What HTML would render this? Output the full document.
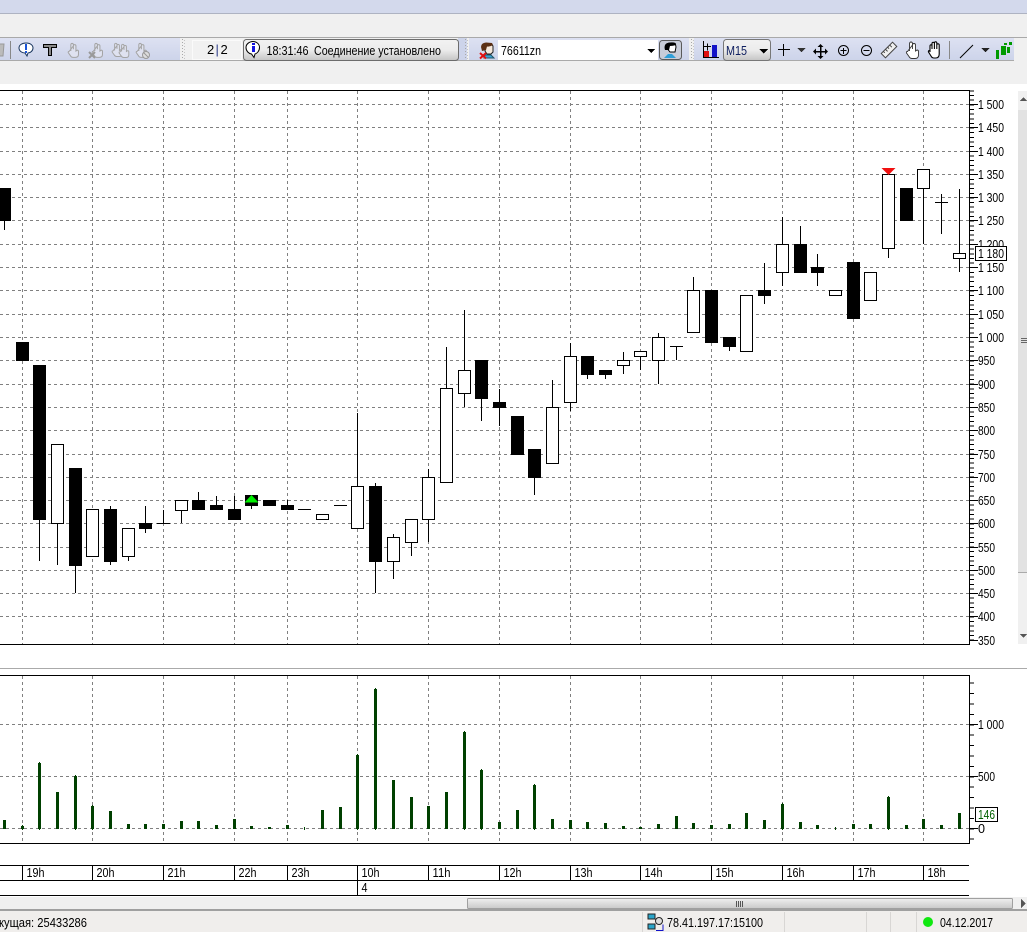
<!DOCTYPE html>
<html><head><meta charset="utf-8"><title>Chart</title>
<style>
html,body{margin:0;padding:0;background:#fff;overflow:hidden}
svg{display:block;font-family:"Liberation Sans","Noto Sans CJK SC",sans-serif;font-size:13px}
.c{shape-rendering:crispEdges}
.g{stroke:#808080;stroke-width:1;stroke-dasharray:3 3;fill:none}
.w{fill:#fff;stroke:#000;stroke-width:1}
</style></head><body>
<svg width="1027" height="932" viewBox="0 0 1027 932" xmlns="http://www.w3.org/2000/svg">
<defs>
<linearGradient id="tb" x1="0" y1="0" x2="0" y2="1"><stop offset="0" stop-color="#dde1f2"/><stop offset="1" stop-color="#cdd4ea"/></linearGradient>
<linearGradient id="btn" x1="0" y1="0" x2="0" y2="1"><stop offset="0" stop-color="#f2f2f2"/><stop offset=".5" stop-color="#ececec"/><stop offset="1" stop-color="#c4c4c4"/></linearGradient>
<linearGradient id="sb" x1="0" y1="0" x2="0" y2="1"><stop offset="0" stop-color="#f0f0f0"/><stop offset="1" stop-color="#c9c9c9"/></linearGradient>
<g id="hand"><path d="M4.500 10V3q0-2 1.500-2t1.500 2v5M7.500 4q0-1.500 1.500-1.500T10.500 4v6l1.500-1q1.500 0 1.500 1.500V14q0 3.500-3.500 3.500H7q-2 0-3-2L1.500 12q-.5-1.500 1-1.500z"/></g>
<g id="palm"><path d="M3 11V5q0-1.200 1-1.200T5 5v3V2.500q0-1.200 1.200-1.200t1.200 1.200V8V2q0-1.200 1.200-1.200T9.800 2v6V4q0-1.200 1.200-1.200T12.200 4v9q0 4-3.500 4H7q-2 0-3-2l-2.500-4q-.5-1.500 1-1.500z"/></g>
</defs>

<!-- window background -->
<rect class="c" x="0" y="0" width="1027" height="13" fill="#d3d9ec"/>
<rect class="c" x="0" y="13" width="1027" height="1" fill="#aeb3c2"/>
<rect class="c" x="0" y="14" width="1027" height="70" fill="#f0f0f0"/>
<rect class="c" x="0" y="37" width="1027" height="1" fill="#a9a9a9"/>
<rect class="c" x="0" y="38" width="180" height="22" fill="url(#tb)"/>
<rect class="c" x="458" y="38" width="9" height="22" fill="#cdd4ea"/>
<rect class="c" x="469" y="38" width="220" height="22" fill="url(#tb)"/>
<rect class="c" x="694" y="38" width="320" height="22" fill="url(#tb)"/>
<rect class="c" x="0" y="60" width="1014" height="1" fill="#aaa"/>
<path class="c" d="M182.500 39V60M465.500 39V60M691.500 39V60" stroke="#a8a8a8" stroke-dasharray="1 2"/>
<path class="c" d="M184.500 40V60M467.500 40V60M693.500 40V60" stroke="#c4c4c4" stroke-dasharray="1 2"/>

<!-- left toolbar icons -->
<path d="M-3 44h7l-1 12h-6z" fill="#bbb" stroke="#999"/>
<rect class="c" x="10" y="41" width="1" height="18" fill="#888"/>
<path d="M26 43c4.500 0 7 2.300 7 5s-2.500 5-5 5l-1 3-2-3c-3 0-6-2-6-5s3-5 7-5z" fill="#fff" stroke="#16335c"/>
<rect class="c" x="25" y="44" width="2" height="6" fill="#1a55d8"/><rect class="c" x="25" y="51" width="2" height="2" fill="#1a55d8"/>
<path class="c" d="M43.500 44.500h13v3h-5v8h-3v-8h-5z" fill="#888" stroke="#000"/>
<g fill="#dfe2f0" stroke="#a4a4a4" stroke-width="1.200">
<use href="#hand" transform="translate(67 42.500) scale(.85)"/>
<use href="#hand" transform="translate(91 42.500) scale(.85)"/>
<use href="#hand" transform="translate(111 42.500) scale(.8)"/>
<use href="#hand" transform="translate(118 43.500) scale(.8)"/>
<use href="#hand" transform="translate(135 42.500) scale(.85)"/>
</g>
<path d="M89 52l6 6M95 52l-6 6" stroke="#999" stroke-width="2"/>
<circle cx="146" cy="55" r="3.500" fill="#ddd" stroke="#999"/>
<path d="M143.500 52.500l5 5" stroke="#999"/>

<!-- panel 2|2 -->
<rect class="c" x="192.500" y="40.500" width="49" height="19" fill="#f1f1f1" stroke="#fafafa"/>
<text x="207" y="54">2</text><text x="215.500" y="54" fill="#30408c">|</text><text x="220.500" y="54">2</text>

<!-- message -->
<rect x="243.500" y="39.500" width="215" height="21" rx="3" fill="url(#btn)" stroke="#6c6c6c"/>
<path d="M253 41.500c3.500 0 6.500 2.500 6.500 6s-2.500 6-4.500 6.500l-1 3.500-2.500-3.500c-3-.5-5.500-3-5.500-6.500s3.500-6 7-6z" fill="#fff" stroke="#000"/>
<rect class="c" x="252" y="43" width="3" height="2" fill="#1212e0"/><rect class="c" x="252" y="46" width="3" height="6" fill="#1212e0"/>
<text x="266.500" y="55" textLength="42" lengthAdjust="spacingAndGlyphs">18:31:46</text>
<text x="314" y="55" textLength="127" lengthAdjust="spacingAndGlyphs">Соединение установлено</text>

<!-- account combo -->
<path d="M486 44h5l2 2v6l-2 2h-4l-2-3z" fill="#f4e8dc" stroke="#222"/>
<path d="M482 51l-1-4q0-4 5-4.500l6 .5 1 2q-3 2-6 1.500l-1 3.500z" fill="#5a2f14"/>
<path d="M484 58l1-3h6l3 3z" fill="#3aa4d8" stroke="#256"/>
<path d="M480 53l6 5.500M486 53l-6 5.500" stroke="#e01010" stroke-width="2"/>
<rect class="c" x="498" y="40" width="160" height="20" fill="#fff"/>
<text x="501" y="55" textLength="40" lengthAdjust="spacingAndGlyphs">76611zn</text>
<path class="c" d="M647 49h8l-4 4z" fill="#000"/>
<rect x="659.500" y="40.500" width="22" height="19" rx="3" fill="#c8ccd8" stroke="#5a5a5a"/>
<path d="M666 47q0-4 5-4t5 4l-1 5h-5z" fill="#fff" stroke="#000"/>
<path d="M665 50q-2-7 5-7.500t6 2.500q-3 1-6 1l-1 4z" fill="#000"/>
<path d="M664 58l4-4h4l4 4z" fill="#2f9fd8"/>

<!-- right toolbar -->
<path class="c" d="M703.500 41v16.500H719" stroke="#000" fill="none"/>
<rect class="c" x="704" y="51" width="5" height="6" fill="#e01010"/>
<rect class="c" x="712" y="45" width="5" height="12" fill="#1212c8"/>
<path class="c" d="M707.500 43.500v7M704 46.500h7" stroke="#000"/>
<rect x="723.500" y="39.500" width="47" height="21" rx="3" fill="url(#btn)" stroke="#777"/>
<text x="726" y="55" fill="#102060" textLength="21" lengthAdjust="spacingAndGlyphs">M15</text>
<path class="c" d="M759 49h9l-4.500 4.500z" fill="#000"/>
<path class="c" d="M783.500 44v12M778 49.500h12" stroke="#000"/>
<path class="c" d="M797 48h9l-4.500 4z" fill="#333"/>
<path class="c" d="M820.500 46v11M815 51.500h11" stroke="#000" stroke-width="1.500"/>
<path d="M820.500 44l-3 3h6zM820.500 59l-3-3h6zM813 51.500l3-3v6zM828 51.500l-3-3v6z" fill="#000"/>
<circle cx="843.500" cy="50.500" r="5" fill="none" stroke="#000"/><path class="c" d="M843.500 48v6M840.500 50.500h6" stroke="#000"/>
<circle cx="866.500" cy="50.500" r="5" fill="none" stroke="#000"/><path class="c" d="M863.500 50.500h6" stroke="#000"/>
<g transform="rotate(-45 889 50)"><rect x="881" y="47" width="16" height="6" fill="#f0f0f0" stroke="#444"/><path d="M884 47v2M887 47v3M890 47v2M893 47v3" stroke="#444"/></g>
<use href="#hand" x="905" y="41" fill="#fff" stroke="#333" stroke-width=".9"/>
<use href="#palm" x="927" y="41" fill="#fff" stroke="#000" stroke-width="1.100"/>
<rect class="c" x="949" y="41" width="1" height="18" fill="#888"/>
<path d="M960 58L973 45" stroke="#000"/>
<path class="c" d="M981 48h9l-4.500 4z" fill="#222"/>
<path class="c" d="M996 50h3v9h-3zM1001 46h5v9h-5zM1007 47h3v6h-3zM1004 43h3v2h-3zM1009 42h3v3h-3z" fill="#009a00"/>

<!-- main chart -->
<rect class="c" x="0" y="84" width="1027" height="827" fill="#fff"/>
<rect class="c" x="1018" y="91" width="9" height="553" fill="#f0f0f0"/>
<rect class="c" x="1018" y="110" width="9" height="462" fill="#e2e2e2"/>
<rect class="c" x="1018" y="572" width="9" height="1" fill="#aaa"/>
<path class="c" d="M1020 101h7l-3.500-4zM1020 634h7l-3.500 4z" fill="#555"/>
<path class="c" d="M1021 338.500h6M1021 340.500h6M1021 342.500h6" stroke="#666"/>

<!-- grids -->
<path class="c g" d="M0 104.500H969M0 127.500H969M0 151.500H969M0 174.500H969M0 197.500H969M0 220.500H969M0 244.500H969M0 267.500H969M0 290.500H969M0 314.500H969M0 337.500H969M0 360.500H969M0 384.500H969M0 407.500H969M0 430.500H969M0 454.500H969M0 477.500H969M0 500.500H969M0 523.500H969M0 547.500H969M0 570.500H969M0 593.500H969M0 616.500H969"/>
<path class="c g" d="M22.500 91V644M92.500 91V644M163.500 91V644M234.500 91V644M287.500 91V644M357.500 91V644M428.500 91V644M499.500 91V644M570.500 91V644M640.500 91V644M711.500 91V644M782.500 91V644M853.500 91V644M923.500 91V644"/>

<!-- wicks -->
<path class="c" stroke="#000" fill="none" d="M4.500 220V230M39.500 520V561M57.500 523V565M75.500 566V593M110.500 506V565M128.500 557V561M145.500 506V533M163.500 510V523M181.500 510V523M198.500 492V500M216.500 496V505M234.500 496V509M251.500 506V509M287.500 500V505M357.500 413V486M375.500 483V593M393.500 534V579M411.500 542V556M428.500 469V542M446.500 347V388M464.500 310V407M481.500 399V421M499.500 389V426M534.500 478V495M552.500 380V407M570.500 343V411M587.500 375V379M605.500 375V379M623.500 352V374M640.500 357V370M658.500 333V384M676.500 346V360M693.500 277V290M729.500 347V351M764.500 263V304M782.500 217V286M800.500 226V244M817.500 254V286M888.500 248V258M923.500 189V244M941.500 194V234M959.500 189V272M157 523.500H170M298 509.500H311M334 505.500H347M670 346.500H683M935 202.500H948"/>

<!-- black bodies -->
<g class="c" fill="#000">
<rect x="-2" y="188" width="13" height="33"/>
<rect x="16" y="342" width="13" height="19"/>
<rect x="33" y="365" width="13" height="155"/>
<rect x="69" y="468" width="13" height="98"/>
<rect x="104" y="509" width="13" height="53"/>
<rect x="139" y="523" width="13" height="6"/>
<rect x="192" y="500" width="13" height="10"/>
<rect x="210" y="505" width="13" height="5"/>
<rect x="228" y="509" width="13" height="11"/>
<rect x="245" y="495" width="13" height="11"/>
<rect x="263" y="500" width="13" height="6"/>
<rect x="281" y="505" width="13" height="5"/>
<rect x="369" y="486" width="13" height="76"/>
<rect x="475" y="360" width="13" height="39"/>
<rect x="493" y="402" width="13" height="6"/>
<rect x="511" y="416" width="13" height="39"/>
<rect x="528" y="449" width="13" height="29"/>
<rect x="581" y="356" width="13" height="19"/>
<rect x="599" y="370" width="13" height="5"/>
<rect x="705" y="290" width="13" height="53"/>
<rect x="723" y="337" width="13" height="10"/>
<rect x="758" y="290" width="13" height="6"/>
<rect x="794" y="244" width="13" height="29"/>
<rect x="811" y="267" width="13" height="6"/>
<rect x="847" y="262" width="13" height="57"/>
<rect x="900" y="188" width="13" height="33"/>
</g>
<!-- white bodies -->
<g class="c w">
<rect x="51.500" y="444.500" width="12" height="79"/>
<rect x="86.500" y="509.500" width="12" height="47"/>
<rect x="122.500" y="528.500" width="12" height="28"/>
<rect x="175.500" y="500.500" width="12" height="10"/>
<rect x="316.500" y="514.500" width="12" height="5"/>
<rect x="351.500" y="486.500" width="12" height="42"/>
<rect x="387.500" y="537.500" width="12" height="24"/>
<rect x="405.500" y="519.500" width="12" height="23"/>
<rect x="422.500" y="477.500" width="12" height="42"/>
<rect x="440.500" y="388.500" width="12" height="94"/>
<rect x="458.500" y="370.500" width="12" height="23"/>
<rect x="546.500" y="407.500" width="12" height="56"/>
<rect x="564.500" y="356.500" width="12" height="46"/>
<rect x="617.500" y="360.500" width="12" height="5"/>
<rect x="634.500" y="351.500" width="12" height="5"/>
<rect x="652.500" y="337.500" width="12" height="23"/>
<rect x="687.500" y="290.500" width="12" height="42"/>
<rect x="740.500" y="295.500" width="12" height="56"/>
<rect x="776.500" y="244.500" width="12" height="28"/>
<rect x="829.500" y="290.500" width="12" height="5"/>
<rect x="864.500" y="272.500" width="12" height="28"/>
<rect x="882.500" y="174.500" width="12" height="74"/>
<rect x="917.500" y="169.500" width="12" height="19"/>
<rect x="953.500" y="253.500" width="12" height="5"/>
</g>
<polygon points="251.500,495 258.500,502.500 244.500,502.500" fill="#00f000"/>
<polygon points="881.500,168 895.500,168 888.500,175" fill="#f01010"/>

<!-- frame & axis -->
<path class="c" d="M0 90.500H970M969.500 90V645M0 644.500H970" stroke="#000" fill="none"/>
<path class="c" d="M972 90.340V644" stroke="#000" stroke-width="4" stroke-dasharray="1 3.655" fill="none"/>
<path class="c" stroke="#000" d="M970 104.500h8M970 127.500h8M970 151.500h8M970 174.500h8M970 197.500h8M970 220.500h8M970 244.500h8M970 267.500h8M970 290.500h8M970 314.500h8M970 337.500h8M970 360.500h8M970 384.500h8M970 407.500h8M970 430.500h8M970 454.500h8M970 477.500h8M970 500.500h8M970 523.500h8M970 547.500h8M970 570.500h8M970 593.500h8M970 616.500h8M970 640.500h8"/>
<g>
<text x="978" y="109" textLength="26" lengthAdjust="spacingAndGlyphs">1 500</text>
<text x="978" y="132" textLength="26" lengthAdjust="spacingAndGlyphs">1 450</text>
<text x="978" y="156" textLength="26" lengthAdjust="spacingAndGlyphs">1 400</text>
<text x="978" y="179" textLength="26" lengthAdjust="spacingAndGlyphs">1 350</text>
<text x="978" y="202" textLength="26" lengthAdjust="spacingAndGlyphs">1 300</text>
<text x="978" y="225" textLength="26" lengthAdjust="spacingAndGlyphs">1 250</text>
<text x="978" y="249" textLength="26" lengthAdjust="spacingAndGlyphs">1 200</text>
<text x="978" y="272" textLength="26" lengthAdjust="spacingAndGlyphs">1 150</text>
<text x="978" y="295" textLength="26" lengthAdjust="spacingAndGlyphs">1 100</text>
<text x="978" y="319" textLength="26" lengthAdjust="spacingAndGlyphs">1 050</text>
<text x="978" y="342" textLength="26" lengthAdjust="spacingAndGlyphs">1 000</text>
<text x="978" y="365" textLength="17" lengthAdjust="spacingAndGlyphs">950</text>
<text x="978" y="389" textLength="17" lengthAdjust="spacingAndGlyphs">900</text>
<text x="978" y="412" textLength="17" lengthAdjust="spacingAndGlyphs">850</text>
<text x="978" y="435" textLength="17" lengthAdjust="spacingAndGlyphs">800</text>
<text x="978" y="459" textLength="17" lengthAdjust="spacingAndGlyphs">750</text>
<text x="978" y="482" textLength="17" lengthAdjust="spacingAndGlyphs">700</text>
<text x="978" y="505" textLength="17" lengthAdjust="spacingAndGlyphs">650</text>
<text x="978" y="528" textLength="17" lengthAdjust="spacingAndGlyphs">600</text>
<text x="978" y="552" textLength="17" lengthAdjust="spacingAndGlyphs">550</text>
<text x="978" y="575" textLength="17" lengthAdjust="spacingAndGlyphs">500</text>
<text x="978" y="598" textLength="17" lengthAdjust="spacingAndGlyphs">450</text>
<text x="978" y="621" textLength="17" lengthAdjust="spacingAndGlyphs">400</text>
<text x="978" y="645" textLength="17" lengthAdjust="spacingAndGlyphs">350</text>
</g>
<rect class="c" x="975.500" y="246.500" width="31" height="14" fill="#fff" stroke="#000"/>
<text x="978" y="258" textLength="26" lengthAdjust="spacingAndGlyphs">1 180</text>

<!-- volume pane -->
<rect class="c" x="0" y="668" width="1027" height="1" fill="#aaa"/>
<path class="c g" d="M0 724.500H969M0 776.500H969M0 828.500H969"/>
<path class="c g" d="M22.500 676V843M92.500 676V843M163.500 676V843M234.500 676V843M287.500 676V843M357.500 676V843M428.500 676V843M499.500 676V843M570.500 676V843M640.500 676V843M711.500 676V843M782.500 676V843M853.500 676V843M923.500 676V843"/>
<path class="c" stroke="#004000" stroke-width="3" fill="none" d="M4.500 820V829M22.500 826V829M39.500 763V829M57.500 792V829M75.500 776V829M92.500 806V829M110.500 811V829M128.500 824V829M145.500 824V829M163.500 824V829M181.500 821V829M198.500 821V829M216.500 825V829M234.500 819V829M251.500 826V829M269.500 827V829M287.500 825V829M322.500 810V829M340.500 807V829M357.500 755V829M375.500 689V829M393.500 780V829M411.500 797V829M428.500 806V829M446.500 792V829M464.500 732V829M481.500 770V829M499.500 822V829M517.500 810V829M534.500 785V829M552.500 819V829M570.500 820V829M587.500 822V829M605.500 823V829M623.500 826V829M640.500 827V829M658.500 824V829M676.500 816V829M693.500 823V829M711.500 825V829M729.500 824V829M746.500 813V829M764.500 820V829M782.500 804V829M800.500 822V829M817.500 825V829M853.500 824V829M870.500 824V829M888.500 797V829M906.500 825V829M923.500 819V829M941.500 825V829M959.500 813V829"/>
<path class="c" stroke="#004000" fill="none" d="M39.500 762V830M75.500 775V830M357.500 754V830M375.500 688V830M464.500 731V830M304.500 827V830M835.500 827V830M22.500 825V830M92.500 805V830M481.500 769V830M534.500 784V830M782.500 803V830M888.500 796V830"/>
<path class="c" d="M0 675.500H970M969.500 675V844M0 843.500H970" stroke="#000" fill="none"/>
<path class="c" d="M972 682.700V843" stroke="#000" stroke-width="4" stroke-dasharray="1 9.400" fill="none"/>
<path class="c" stroke="#000" d="M970 724.500h8M970 776.500h8M970 828.500h8"/>
<text x="978" y="729" textLength="26" lengthAdjust="spacingAndGlyphs">1 000</text>
<text x="978" y="781" textLength="17" lengthAdjust="spacingAndGlyphs">500</text>
<text x="978" y="833" textLength="7" lengthAdjust="spacingAndGlyphs">0</text>
<rect class="c" x="975.500" y="807.500" width="22" height="14" fill="#fff" stroke="#000"/>
<text x="978" y="819" fill="#006000" textLength="17" lengthAdjust="spacingAndGlyphs">146</text>

<!-- time axis -->
<path class="c" stroke="#000" fill="none" d="M0 865.500H969M0 880.500H969M0 895.500H969M22.500 865V880M92.500 865V880M163.500 865V880M234.500 865V880M287.500 865V880M357.500 865V895M428.500 865V880M499.500 865V880M570.500 865V880M640.500 865V880M711.500 865V880M782.500 865V880M853.500 865V880M923.500 865V880"/>
<g>
<text x="26.500" y="877" textLength="18" lengthAdjust="spacingAndGlyphs">19h</text>
<text x="96.500" y="877" textLength="18" lengthAdjust="spacingAndGlyphs">20h</text>
<text x="167.500" y="877" textLength="18" lengthAdjust="spacingAndGlyphs">21h</text>
<text x="238.500" y="877" textLength="18" lengthAdjust="spacingAndGlyphs">22h</text>
<text x="291.500" y="877" textLength="18" lengthAdjust="spacingAndGlyphs">23h</text>
<text x="361.500" y="877" textLength="18" lengthAdjust="spacingAndGlyphs">10h</text>
<text x="432.500" y="877" textLength="18" lengthAdjust="spacingAndGlyphs">11h</text>
<text x="503.500" y="877" textLength="18" lengthAdjust="spacingAndGlyphs">12h</text>
<text x="574.500" y="877" textLength="18" lengthAdjust="spacingAndGlyphs">13h</text>
<text x="644.500" y="877" textLength="18" lengthAdjust="spacingAndGlyphs">14h</text>
<text x="715.500" y="877" textLength="18" lengthAdjust="spacingAndGlyphs">15h</text>
<text x="786.500" y="877" textLength="18" lengthAdjust="spacingAndGlyphs">16h</text>
<text x="857.500" y="877" textLength="18" lengthAdjust="spacingAndGlyphs">17h</text>
<text x="927.500" y="877" textLength="18" lengthAdjust="spacingAndGlyphs">18h</text>
<text x="361.500" y="892" textLength="6" lengthAdjust="spacingAndGlyphs">4</text>
</g>

<!-- horizontal scrollbar -->
<rect class="c" x="0" y="897" width="1027" height="13" fill="#f0f0f0"/>
<rect x="467.500" y="898.500" width="545" height="10" rx="1" fill="url(#sb)" stroke="#a0a0a0"/>
<path class="c" d="M736.500 901v6M738.500 901v6M740.500 901v6M742.500 901v6" stroke="#555"/>
<path class="c" d="M1021 899l5 4.500-5 4.500z" fill="#555"/>
<rect class="c" x="0" y="909" width="1027" height="2" fill="#a0a0a0"/>

<!-- status bar -->
<rect class="c" x="0" y="911" width="1027" height="21" fill="#f0eeec"/>
<path class="c" stroke="#d8d6d4" d="M642.500 912V932M784.500 912V932M866.500 912V932M890.500 912V932M916.500 912V932"/>
<text x="-1" y="927" textLength="88" lengthAdjust="spacingAndGlyphs">кущая: 25433286</text>
<rect class="c" x="648" y="914" width="7" height="5" fill="#2aa4c8" stroke="#222"/>
<rect class="c" x="648" y="924" width="7" height="5" fill="#2aa4c8" stroke="#222"/>
<circle cx="659" cy="921" r="3.500" fill="#ddd" stroke="#222"/>
<path class="c" d="M656 930.500h7v-6" stroke="#1212c8" fill="none"/>
<text x="667" y="927" textLength="96" lengthAdjust="spacingAndGlyphs">78.41.197.17:15100</text>
<circle cx="928" cy="922" r="5" fill="#10e810"/>
<text x="940" y="927" textLength="53" lengthAdjust="spacingAndGlyphs">04.12.2017</text>
</svg>
</body></html>
